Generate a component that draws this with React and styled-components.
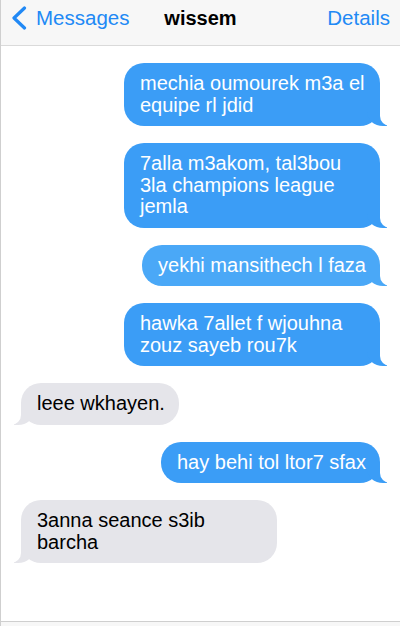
import React from "react";
import styled, { createGlobalStyle, css } from "styled-components";

const GlobalStyle = createGlobalStyle`
  html, body {
    margin: 0;
    padding: 0;
    background: #fff;
  }
  body {
    font-family: "Liberation Sans", Arial, sans-serif;
  }
`;

const Screen = styled.div`
  display: flex;
  flex-direction: column;
  height: 626px;
  width: 400px;
  box-sizing: border-box;
  border-left: 1px solid #cfcfcf;
  overflow: hidden;
`;

const Header = styled.header`
  display: flex;
  align-items: center;
  justify-content: space-between;
  height: 36px;
  padding: 0 10px 9px 10px;
  background: #f7f7f7;
  border-bottom: 1px solid #dadada;
  font-size: 20.5px;
`;

const NavButton = styled.div`
  display: flex;
  align-items: center;
  gap: 9px;
  color: #2189f5;
  width: ${p => p.$w || "auto"};
  justify-content: ${p => (p.$right ? "flex-end" : "flex-start")};
`;

const Title = styled.div`
  font-weight: 700;
  font-size: 20px;
  color: #000;
`;

const Thread = styled.div`
  flex: 1;
  display: flex;
  flex-direction: column;
  gap: 17px;
  padding: 17px 20px 0 20px;
  background: #fff;
`;

const Bubble = styled.div`
  position: relative;
  isolation: isolate;
  max-width: 256px;
  box-sizing: border-box;
  padding: 10px 14px 10px 16px;
  border-radius: 20px;
  font-size: 20px;
  line-height: 21.5px;
  align-self: ${p => (p.$me ? "flex-end" : "flex-start")};
  background: ${p => p.$bg};
  color: ${p => (p.$me ? "#fff" : "#000")};

  &::before {
    content: "";
    position: absolute;
    z-index: -1;
    bottom: 0;
    height: 20px;
    ${p =>
      p.$me
        ? css`
            right: -7px;
            border-right: 20px solid ${p.$bg};
            border-bottom-left-radius: 16px 14px;
          `
        : css`
            left: -7px;
            border-left: 20px solid ${p.$bg};
            border-bottom-right-radius: 16px 14px;
          `}
  }

  &::after {
    content: "";
    position: absolute;
    z-index: 1;
    bottom: 0;
    width: 26px;
    height: 20px;
    background: #fff;
    ${p =>
      p.$me
        ? css`
            right: -26px;
            border-bottom-left-radius: 10px;
          `
        : css`
            left: -26px;
            border-bottom-right-radius: 10px;
          `}
  }
`;

const Composer = styled.div`
  height: 4px;
  background: #f7f7f7;
  border-top: 1px solid #cfcfcf;
`;

const BLUE = "#3b9df6";

const messages = [
  { me: true, text: "mechia oumourek m3a el equipe rl jdid" },
  { me: true, text: "7alla m3akom, tal3bou 3la champions league jemla" },
  { me: true, text: "yekhi mansithech l faza", bg: "#4aa8f7" },
  { me: true, text: "hawka 7allet f wjouhna zouz sayeb rou7k" },
  { me: false, text: "leee wkhayen." },
  { me: true, text: "hay behi tol ltor7 sfax" },
  { me: false, text: "3anna seance s3ib barcha" }
];

const Chevron = () => (
  <svg width="16" height="24" viewBox="0 0 16 24">
    <polyline
      points="13.5,2 3,12 13.5,22"
      fill="none"
      stroke="#2189f5"
      strokeWidth="3.2"
      strokeLinecap="round"
      strokeLinejoin="round"
    />
  </svg>
);

const App = () => (
  <>
    <GlobalStyle />
    <Screen>
      <Header>
        <NavButton $w="130px">
          <Chevron />
          <span>Messages</span>
        </NavButton>
        <Title>wissem</Title>
        <NavButton $w="130px" $right>
          Details
        </NavButton>
      </Header>
      <Thread>
        {messages.map((m, i) => (
          <Bubble key={i} $me={m.me} $bg={m.bg || (m.me ? BLUE : "#e5e5ea")}>
            {m.text}
          </Bubble>
        ))}
      </Thread>
      <Composer />
    </Screen>
  </>
);

export default App;
